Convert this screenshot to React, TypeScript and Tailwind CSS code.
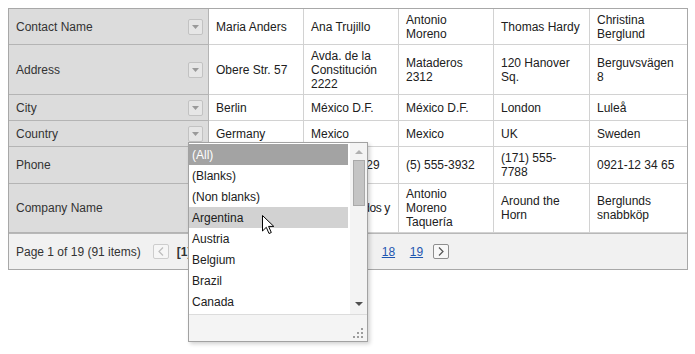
import React from "react";

type Row = { label: string; values: string[]; h: string };

const rows: Row[] = [
  { label: "Contact Name", values: ["Maria Anders", "Ana Trujillo", "Antonio Moreno", "Thomas Hardy", "Christina Berglund"], h: "h-[36px]" },
  { label: "Address", values: ["Obere Str. 57", "Avda. de la Constitución 2222", "Mataderos 2312", "120 Hanover Sq.", "Berguvsvägen 8"], h: "h-[50px]" },
  { label: "City", values: ["Berlin", "México D.F.", "México D.F.", "London", "Luleå"], h: "h-[26px]" },
  { label: "Country", values: ["Germany", "Mexico", "Mexico", "UK", "Sweden"], h: "h-[26px]" },
  { label: "Phone", values: ["030-0074321", "(5) 555-4729", "(5) 555-3932", "(171) 555-7788", "0921-12 34 65"], h: "h-[37px]" },
  { label: "Company Name", values: ["Alfreds Futterkiste", "Ana Trujillo Emparedados y helados", "Antonio Moreno Taquería", "Around the Horn", "Berglunds snabbköp"], h: "h-[49px]" },
];

const items = ["(All)", "(Blanks)", "(Non blanks)", "Argentina", "Austria", "Belgium", "Brazil", "Canada"];

function FilterButton() {
  return (
    <div className="flex h-[16px] w-[15px] items-center justify-center rounded-[2px] border border-[#c2c2c2] bg-[#e6e6e6]">
      <svg width="7" height="4" viewBox="0 0 7 4">
        <path d="M0 0 L7 0 L3.5 4 Z" fill="#9a9a9a" />
      </svg>
    </div>
  );
}

function PagerButton({ dir, active }: { dir: "prev" | "next"; active: boolean }) {
  return (
    <div
      className={`flex h-[15px] w-[16px] items-center justify-center rounded-[2px] border ${
        active ? "border-[#8e8e8e] bg-[#f8f8f8]" : "border-[#cdcdcd] bg-[#f6f6f6]"
      }`}
    >
      <svg width="6" height="9" viewBox="0 0 6 9">
        <path
          d={dir === "prev" ? "M5 0.5 L1 4.5 L5 8.5" : "M1 0.5 L5 4.5 L1 8.5"}
          fill="none"
          stroke={active ? "#555" : "#bdbdbd"}
          strokeWidth="1.2"
        />
      </svg>
    </div>
  );
}

export default function App() {
  return (
    <div className="relative h-[354px] w-[695px] overflow-hidden bg-white p-[8px] font-['Liberation_Sans',Arial,sans-serif] text-[12px] leading-[14px] text-[#202020]">
      <div className="w-[680px] border border-[#a8a8a8]">
        <div className="grid grid-cols-[200px_95px_95px_95px_96px_97px]">
          {rows.map((r) => (
            <React.Fragment key={r.label}>
              <div className={`${r.h} flex items-center justify-between border-b border-r border-[#b4b4b4] bg-[#dcdcdc] pl-[7px] pr-[5px] text-[#333]`}>
                <span>{r.label}</span>
                <FilterButton />
              </div>
              {r.values.map((v, i) => (
                <div
                  key={i}
                  className={`${r.h} flex items-center border-b border-[#d2d2d2] px-[7px] ${i < 4 ? "border-r" : ""}`}
                >
                  <span className={v.length > 30 ? "tracking-[-0.4px]" : ""}>{v}</span>
                </div>
              ))}
            </React.Fragment>
          ))}
        </div>
        <div className="flex h-[36px] items-center border-t border-[#b8b8b8] bg-[#f1f1f1] pl-[7px] text-[#333]">
          <span>Page 1 of 19 (91 items)</span>
          <div className="ml-[12px]">
            <PagerButton dir="prev" active={false} />
          </div>
          <span className="ml-[8px] w-[177px] font-bold">[1]</span>
          <span className="w-[28px] text-[#1e56b0] underline">17</span>
          <span className="w-[28px] text-[#1e56b0] underline">18</span>
          <span className="w-[23px] text-[#1e56b0] underline">19</span>
          <PagerButton dir="next" active={true} />
        </div>
      </div>

      {/* header filter dropdown */}
      <div className="absolute left-[188px] top-[142px] flex h-[200px] w-[180px] flex-col border border-[#a2a2a2] bg-white shadow-[2px_2px_4px_rgba(0,0,0,0.18)]">
        <div className="flex h-[171px]">
          <div className="w-[159px] pt-[1px]">
            {items.map((it, i) => (
              <div
                key={it}
                className={`flex h-[21px] items-center pl-[3px] ${
                  i === 0 ? "bg-[#a3a3a3] text-white" : i === 3 ? "bg-[#d2d2d2]" : ""
                }`}
              >
                {it}
              </div>
            ))}
          </div>
          <div className="ml-[2px] flex w-[17px] flex-col items-center bg-[#f3f3f3]">
            <svg className="mt-[7px]" width="8" height="4" viewBox="0 0 8 4">
              <path d="M4 0 L8 4 L0 4 Z" fill="#b0b0b0" />
            </svg>
            <div className="mt-[6px] h-[46px] w-[12px] border border-[#a9a9a9] bg-[#c4c4c4]" />
            <div className="flex-1" />
            <svg className="mb-[8px]" width="8" height="4" viewBox="0 0 8 4">
              <path d="M0 0 L8 0 L4 4 Z" fill="#505050" />
            </svg>
          </div>
        </div>
        <div className="flex flex-1 items-end justify-end border-t border-[#dcdcdc] bg-[#f4f4f4] pb-[3px] pr-[3px]">
          <svg width="11" height="10" viewBox="0 0 11 10">
            <rect x="8" y="0" width="2" height="2" fill="#9c9c9c" />
            <rect x="4" y="4" width="2" height="2" fill="#9c9c9c" />
            <rect x="8" y="4" width="2" height="2" fill="#9c9c9c" />
            <rect x="0" y="8" width="2" height="2" fill="#9c9c9c" />
            <rect x="4" y="8" width="2" height="2" fill="#9c9c9c" />
            <rect x="8" y="8" width="2" height="2" fill="#9c9c9c" />
          </svg>
        </div>
      </div>

      {/* mouse cursor */}
      <svg className="absolute left-[262px] top-[215px]" width="13" height="20" viewBox="0 0 13 20">
        <path d="M0.5 0.5 L0.5 16 L4.3 12.3 L7 18.5 L9.3 17.5 L6.6 11.4 L11.8 11.4 Z" fill="#fff" stroke="#000" strokeWidth="1" strokeLinejoin="round" />
      </svg>
    </div>
  );
}
